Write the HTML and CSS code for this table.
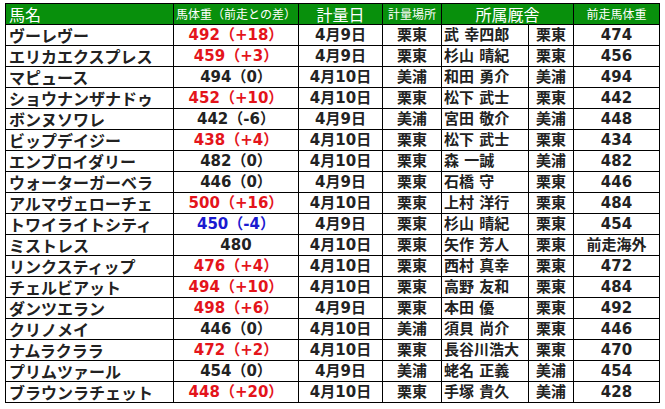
FILE: index.html
```html
<!DOCTYPE html>
<html lang="ja">
<head>
<meta charset="utf-8">
<link rel="stylesheet" href="styles.css">
</head>
<body>
<div class="wrap">
<table class="tbl">
<colgroup>
<col class="c-name"><col class="c-wt"><col class="c-date"><col class="c-place"><col class="c-tr"><col class="c-st"><col class="c-prev">
</colgroup>
<thead>
<tr>
<th class="h-name">馬名</th>
<th class="h-small">馬体重（前走との差）</th>
<th class="h-big">計量日</th>
<th class="h-small">計量場所</th>
<th class="h-mid" colspan="2">所属厩舎</th>
<th class="h-small">前走馬体重</th>
</tr>
</thead>
<tbody>
<tr><td class="name">ヴーレヴー</td><td class="wt up">492（+18）</td><td>4月9日</td><td>栗東</td><td class="tr">武 幸四郎</td><td>栗東</td><td class="num">474</td></tr>
<tr><td class="name">エリカエクスプレス</td><td class="wt up">459（+3）</td><td>4月9日</td><td>栗東</td><td class="tr">杉山 晴紀</td><td>栗東</td><td class="num">456</td></tr>
<tr><td class="name">マピュース</td><td class="wt">494（0）</td><td>4月10日</td><td>美浦</td><td class="tr">和田 勇介</td><td>美浦</td><td class="num">494</td></tr>
<tr><td class="name">ショウナンザナドゥ</td><td class="wt up">452（+10）</td><td>4月10日</td><td>栗東</td><td class="tr">松下 武士</td><td>栗東</td><td class="num">442</td></tr>
<tr><td class="name">ボンヌソワレ</td><td class="wt">442（-6）</td><td>4月9日</td><td>美浦</td><td class="tr">宮田 敬介</td><td>美浦</td><td class="num">448</td></tr>
<tr><td class="name">ビップデイジー</td><td class="wt up">438（+4）</td><td>4月10日</td><td>栗東</td><td class="tr">松下 武士</td><td>栗東</td><td class="num">434</td></tr>
<tr><td class="name">エンブロイダリー</td><td class="wt">482（0）</td><td>4月10日</td><td>栗東</td><td class="tr">森 一誠</td><td>美浦</td><td class="num">482</td></tr>
<tr><td class="name">ウォーターガーベラ</td><td class="wt">446（0）</td><td>4月9日</td><td>栗東</td><td class="tr">石橋 守</td><td>栗東</td><td class="num">446</td></tr>
<tr><td class="name">アルマヴェローチェ</td><td class="wt up">500（+16）</td><td>4月10日</td><td>栗東</td><td class="tr">上村 洋行</td><td>栗東</td><td class="num">484</td></tr>
<tr><td class="name">トワイライトシティ</td><td class="wt down">450（-4）</td><td>4月9日</td><td>栗東</td><td class="tr">杉山 晴紀</td><td>栗東</td><td class="num">454</td></tr>
<tr><td class="name">ミストレス</td><td class="wt">480</td><td>4月10日</td><td>栗東</td><td class="tr">矢作 芳人</td><td>栗東</td><td class="num">前走海外</td></tr>
<tr><td class="name">リンクスティップ</td><td class="wt up">476（+4）</td><td>4月10日</td><td>栗東</td><td class="tr">西村 真幸</td><td>栗東</td><td class="num">472</td></tr>
<tr><td class="name">チェルビアット</td><td class="wt up">494（+10）</td><td>4月10日</td><td>栗東</td><td class="tr">高野 友和</td><td>栗東</td><td class="num">484</td></tr>
<tr><td class="name">ダンツエラン</td><td class="wt up">498（+6）</td><td>4月9日</td><td>栗東</td><td class="tr">本田 優</td><td>栗東</td><td class="num">492</td></tr>
<tr><td class="name">クリノメイ</td><td class="wt">446（0）</td><td>4月10日</td><td>美浦</td><td class="tr">須貝 尚介</td><td>栗東</td><td class="num">446</td></tr>
<tr><td class="name">ナムラクララ</td><td class="wt up">472（+2）</td><td>4月10日</td><td>栗東</td><td class="tr">長谷川浩大</td><td>栗東</td><td class="num">470</td></tr>
<tr><td class="name">プリムツァール</td><td class="wt">454（0）</td><td>4月9日</td><td>美浦</td><td class="tr">蛯名 正義</td><td>美浦</td><td class="num">454</td></tr>
<tr><td class="name">ブラウンラチェット</td><td class="wt up">448（+20）</td><td>4月10日</td><td>栗東</td><td class="tr">手塚 貴久</td><td>美浦</td><td class="num">428</td></tr>
</tbody>
</table>
</div>
</body>
</html>
```
FILE: styles.css
```css
html, body {
  margin: 0;
  padding: 0;
  background: #fff;
}
.wrap {
  padding: 3px 0 0 5px;
}
.tbl {
  border-collapse: collapse;
  table-layout: fixed;
  width: 654px;
  font-family: "DejaVu Sans", "Noto Sans CJK JP", sans-serif;
  color: #222;
}
.c-name { width: 168px; }
.c-wt { width: 125px; }
.c-date { width: 84px; }
.c-place { width: 59px; }
.c-tr { width: 87px; }
.c-st { width: 45px; }
.c-prev { width: 86px; }
.tbl th, .tbl td {
  border: 1px solid #000;
  padding: 0;
  height: 20px;
  line-height: 20px;
  white-space: nowrap;
  overflow: hidden;
  text-align: center;
}
.tbl th {
  background: #08900c;
  color: #fff;
  font-family: "Noto Sans CJK JP", sans-serif;
  font-weight: 400;
}
.h-name {
  text-align: left !important;
  padding-left: 3px !important;
  font-size: 16px;
}
.h-big { font-size: 16px; }
.h-mid { font-size: 16px; }
.h-small { font-size: 12px; }
.tbl td {
  font-size: 15px;
  font-weight: 700;
}
.tbl td.name {
  text-align: left;
  padding-left: 3px;
  font-family: "Noto Sans CJK JP", sans-serif;
  font-size: 16px;
}
.tbl td.tr {
  text-align: left;
  padding-left: 2px;
}
.tbl td.up { color: #e4141b; }
.tbl td.down { color: #1a1ad0; }
```
